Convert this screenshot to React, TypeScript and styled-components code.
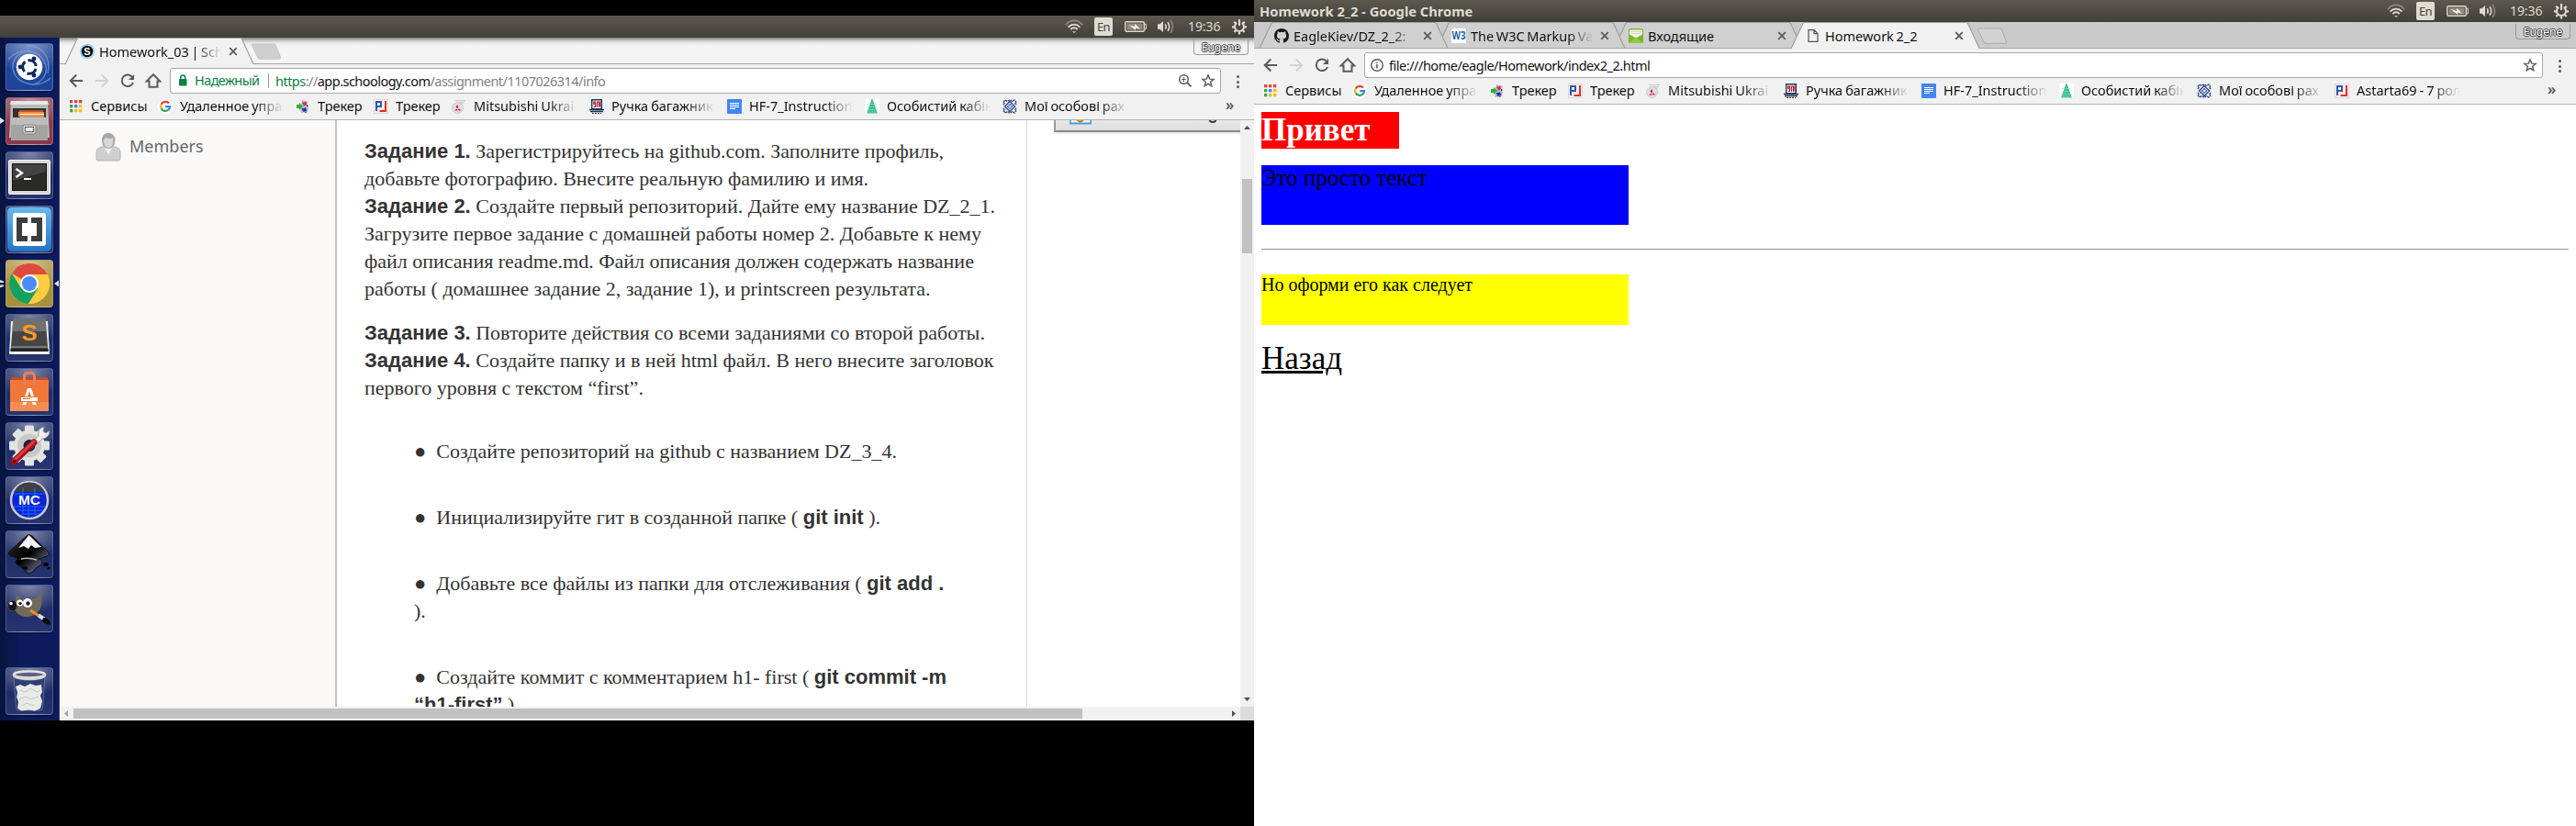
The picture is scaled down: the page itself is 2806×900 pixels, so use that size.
import React from 'react';
import styled, { createGlobalStyle, css } from 'styled-components';

const Global = createGlobalStyle`
  * { box-sizing: border-box; }
  body { margin: 0; background: #000; }
`;

const ui = css`font-family: 'Noto Sans', 'Open Sans', sans-serif;`;

const Desktop = styled.div`
  display: grid;
  grid-template-columns: 1366px 1440px;
  width: 2806px;
  height: 900px;
  overflow: hidden;
`;
const LeftScreen = styled.div`
  display: flex;
  flex-direction: column;
  padding-top: 17px;
  background: #000;
  min-width: 0;
`;
const RightScreen = styled.div`
  display: flex;
  flex-direction: column;
  background: #fff;
  min-width: 0;
`;
const PanelBar = styled.div`
  height: 24px;
  flex: none;
  display: flex;
  align-items: center;
  justify-content: space-between;
  padding: 0 8px 0 6px;
  background: linear-gradient(#5b584e, #403f3a);
  color: #dfdbd2;
  ${ui}
`;
const PanelTitle = styled.div`
  font-size: 14.7px;
  font-weight: 700;
  line-height: 24px;
  white-space: nowrap;
`;
const Tray = styled.div`
  display: flex;
  align-items: center;
  height: 24px;
`;
const Lang = styled.div`
  width: 20px;
  height: 20px;
  margin: 0 13px 0 12px;
  border-radius: 2px;
  background: #dfdbd2;
  color: #45433d;
  font-size: 13px;
  letter-spacing: -0.6px;
  line-height: 20px;
  text-align: center;
`;
const Clock = styled.div`
  width: 35px;
  margin: 0 13px 0 14px;
  font-size: 14px;
  letter-spacing: -0.1px;
  line-height: 24px;
  white-space: nowrap;
`;
const Workspace = styled.div`
  display: flex;
  height: 744px;
`;
const Launcher = styled.div`
  width: 65px;
  flex: none;
  display: flex;
  flex-direction: column;
  gap: 7px;
  padding: 6px 0 6px 0;
  background: linear-gradient(90deg, #071541, #0c1b5b 35%, #0d1b5e);
  border-right: 1px solid #3a3768;
`;
const Slot = styled.div<{ $last?: boolean }>`
  display: flex;
  align-items: center;
  margin-top: ${p => (p.$last ? 'auto' : '0')};
  height: 52px;
`;
const Mark = styled.div`
  width: 6px;
  height: 52px;
  flex: none;
`;
const Tile = styled.div<{ $bg: string }>`
  width: 52px;
  height: 52px;
  flex: none;
  border-radius: 4px;
  border: 1px solid rgba(190, 200, 240, 0.28);
  background: radial-gradient(ellipse 90% 60% at 50% 0, rgba(255,255,255,0.45), rgba(255,255,255,0) 100%), ${p => p.$bg};
  box-shadow: 0 1px 3px rgba(0, 0, 0, 0.5);
  svg { display: block; margin: -1px; }
`;
const Browser = styled.div`
  flex: 1;
  min-width: 0;
  display: flex;
  flex-direction: column;
  background: #fff;
`;
const TabStrip = styled.div<{ $focused?: boolean }>`
  position: relative;
  height: 29px;
  flex: none;
  display: flex;
  padding-left: 5px;
  border-bottom: 1px solid #a6a6a6;
  background: ${p => (p.$focused ? '#cacaca' : 'linear-gradient(#7d7c79 0, #c4c4c3 3px, #ebebeb 6px, #f4f4f4 10px)')};
`;
const TabBox = styled.div<{ $z: number }>`
  position: relative;
  z-index: ${p => p.$z};
  width: 207px;
  height: 29px;
  flex: none;
  margin-right: -14px;
`;
const TabShape = styled.svg`
  position: absolute;
  inset: 0;
`;
const TabInner = styled.div`
  position: relative;
  display: flex;
  align-items: center;
  height: 29px;
  padding-left: 17px;
`;
const TabLabel = styled.div<{ $fade?: boolean }>`
  width: 136px;
  margin-left: 5px;
  padding-right: 1px;
  font-size: 14.5px;
  word-spacing: -1.2px;
  line-height: 28px;
  color: #111;
  white-space: nowrap;
  overflow: hidden;
  ${ui}
  ${p => p.$fade && css`mask-image: linear-gradient(90deg, #000 78%, transparent 98%);`}
`;
const NewTab = styled.svg`
  display: block;
  margin-left: 8px;
`;
const Profile = styled.div`
  position: absolute;
  right: 6px;
  top: 2px;
  width: 60px;
  height: 17px;
  border: 1px solid #9b9b9b;
  border-top: 0;
  border-radius: 0 0 4px 4px;
  color: #fff;
  font-size: 12px;
  line-height: 17px;
  text-align: center;
  text-shadow: 1px 0 #444, -1px 0 #444, 0 1px #444, 0 -1px #444;
  ${ui}
`;
const Toolbar = styled.div`
  display: flex;
  height: 32px;
  flex: none;
  padding: 4px 0 0 4px;
  background: #f1f1f1;
`;
const ToolButton = styled.div`
  width: 28px;
  height: 28px;
  flex: none;
`;
const Address = styled.div`
  flex: 1;
  margin-left: 4px;
  display: flex;
  align-items: center;
  height: 28px;
  padding: 0 5px;
  border: 1px solid #a9a9a9;
  border-radius: 3px;
  background: #fff;
  svg { flex: none; }
`;
const UrlText = styled.div<{ $tight: number }>`
  flex: 1;
  font-size: 14.5px;
  letter-spacing: ${p => p.$tight}px;
  line-height: 26px;
  color: #111;
  white-space: nowrap;
  ${ui}
`;
const Secure = styled.div`
  width: 81px;
  height: 16px;
  margin: 0 7px 0 3px;
  border-right: 1px solid #999;
  color: #0b8043;
  font-size: 14.5px;
  letter-spacing: -0.6px;
  line-height: 14px;
  ${ui}
`;
const Green = styled.span`color: #0b8043;`;
const Grey = styled.span`color: #808080;`;
const MenuDots = styled.div`
  display: flex;
  flex-direction: column;
  align-items: center;
  gap: 2.6px;
  width: 36px;
  padding-top: 8px;
  i { width: 3px; height: 3px; border-radius: 2px; background: #5a5a5a; }
`;
const Bookmarks = styled.div`
  display: flex;
  align-items: center;
  height: 29px;
  flex: none;
  padding: 0 0 0 10px;
  background: #f1f1f1;
  border-bottom: 1px solid #b4b4b4;
`;
const Bookmark = styled.div<{ $w: number }>`
  display: flex;
  align-items: center;
  width: ${p => p.$w}px;
  flex: none;
  height: 28px;
  svg { flex: none; }
`;
const BookmarkLabel = styled.div<{ $fade: boolean }>`
  width: 113px;
  flex: 0 1 auto;
  margin: 0 0 2px 8px;
  overflow: hidden;
  font-size: 14.5px;
  word-spacing: -0.8px;
  line-height: 26px;
  color: #111;
  white-space: nowrap;
  ${ui}
  ${p => p.$fade && css`mask-image: linear-gradient(90deg, #000 72%, transparent 100%);`}
`;
const More = styled.div`
  margin-left: auto;
  width: 31px;
  padding-bottom: 4px;
  font-size: 16px;
  line-height: 22px;
  color: #555;
  font-weight: 600;
  ${ui}
`;

const Viewport = styled.div`
  display: grid;
  grid-template-columns: 1286px 15px;
  grid-template-rows: 639px 15px;
  height: 654px;
`;
const Page = styled.div`
  display: flex;
  overflow: hidden;
`;
const SideNav = styled.div`
  width: 302px;
  flex: none;
  display: flex;
  align-items: flex-start;
  padding: 13px 0 0 39px;
  background: #faf9f8;
  border-right: 2px solid #c4c4c4;
`;
const NavLabel = styled.div`
  margin-left: 9px;
  font-size: 18px;
  line-height: 31px;
  color: #666;
  ${ui}
`;
const Article = styled.div`
  width: 752px;
  flex: none;
  height: 639px;
  padding: 19px 0 0 30px;
  border-right: 1px solid #dadada;
  font: 22px/30px 'Liberation Serif', serif;
  color: #333;
  white-space: nowrap;
`;
const Paragraph = styled.div`margin-bottom: 18px;`;
const Tasks = styled.div`
  display: flex;
  flex-direction: column;
  gap: 42px;
  margin: 39px 0 0 54px;
`;
const Task = styled.div`white-space: pre;`;
const Strong = styled.strong`
  font-family: 'Liberation Sans', sans-serif;
  line-height: 0;
`;
const Aside = styled.div`
  flex: 1;
  padding-left: 29px;
`;
const CardEdge = styled.div`
  display: flex;
  justify-content: space-between;
  height: 13px;
  padding: 0 25px 0 15px;
  background: linear-gradient(#e8e8e8, #dedede);
  border-left: 2px solid #999;
  border-bottom: 2px solid #888;
  box-shadow: 0 2px 1px #eee;
`;
const VScroll = styled.div`
  display: flex;
  flex-direction: column;
  justify-content: space-between;
  align-items: center;
  background: #f1f1f1;
`;
const VThumb = styled.div`
  width: 11px;
  height: 81px;
  margin: 49px 0 auto;
  background: #c1c1c1;
`;
const HScroll = styled.div`
  display: flex;
  align-items: center;
  background: #f1f1f1;
`;
const HThumb = styled.div`
  width: 1099px;
  height: 11px;
  margin-right: auto;
  background: #c1c1c1;
`;
const Corner = styled.div`background: #dcdcdc;`;

const LocalPage = styled.div`
  padding: 8px;
  font-family: 'Liberation Serif', serif;
  color: #000;
`;
const Hello = styled.h1`
  width: 150px;
  height: 40px;
  margin: 0 0 18px;
  background: #f00;
  color: #fff;
  font-size: 35px;
  line-height: 40px;
`;
const Block = styled.p<{ $h: number; $bg: string; $size: number }>`
  width: 400px;
  height: ${p => p.$h}px;
  margin: 0;
  background: ${p => p.$bg};
  font-size: ${p => p.$size}px;
`;
const Rule = styled.hr`
  margin: 26px 0;
  border: 1px solid;
  border-color: #9a9a9a #eee #eee #9a9a9a;
  height: 2px;
`;
const Back = styled.a`
  display: block;
  margin-top: 17px;
  font-size: 35px;
  line-height: 40px;
  text-decoration: underline;
`;

/* ---------- panel ---------- */
const WifiIcon = () => (
  <svg width="20" height="16" viewBox="0 0 20 16" fill="none" strokeWidth="1.8">
    <path d="M.8 6.2C6-.2 14-.2 19.2 6.2" stroke="#8b887f" />
    <path d="M3.6 8.6c3.8-4 9-4 12.8 0" stroke="#dfdbd2" />
    <path d="M6.3 11c2.3-2.2 5.1-2.2 7.4 0" stroke="#dfdbd2" />
    <path d="M8 13.2h4L10 15z" fill="#dfdbd2" stroke="none" />
  </svg>
);
const BatteryIcon = () => (
  <svg width="24" height="14" viewBox="0 0 24 14">
    <rect x=".7" y="1.7" width="20.6" height="10.6" rx="1.5" fill="none" stroke="#dfdbd2" strokeWidth="1.4" />
    <rect x="2.5" y="3.5" width="17" height="7" fill="#8e8b82" />
    <path d="M22 4.2h1.4v5.6H22" fill="none" stroke="#dfdbd2" />
    <path d="M5 5.2 11 7V4l3 2.5 3 3.5-5-1.5V11z" fill="#f3efe6" />
  </svg>
);
const SoundIcon = () => (
  <svg width="20" height="18" viewBox="0 0 20 18" fill="none" stroke="#dfdbd2" strokeWidth="1.6">
    <path d="M1 6.2h2.4L7 3v12l-3.600-3.200H1z" fill="#dfdbd2" stroke="none" />
    <path d="M9.300 6.300c1 1.600 1 3.800 0 5.400M12 4.300c2 2.800 2 6.600 0 9.400" />
    <path d="M15 2c3.200 4 3.200 10 0 14" stroke="#8b887f" />
  </svg>
);
const GearIcon = () => (
  <svg width="16" height="18" viewBox="0 0 16 18" fill="none" stroke="#dfdbd2">
    <path d="M5.300 4.900a5 5 0 1 0 5.400 0" strokeWidth="2" />
    <path d="M8 1v7" strokeWidth="2" />
    <path d="M2.200 3.700l1.700 1.700M13.800 3.700l-1.700 1.700M0 9.300h2.400M16 9.300h-2.400M2.400 15l1.700-1.700M13.600 15l-1.700-1.700M8 17.500V15" strokeWidth="2.200" />
  </svg>
);
const SystemTray = () => (
  <Tray>
    <WifiIcon />
    <Lang>En</Lang>
    <BatteryIcon />
    <Spacer $w={11} />
    <SoundIcon />
    <Clock>19:36</Clock>
    <GearIcon />
  </Tray>
);
const Spacer = styled.span<{ $w: number }>`
  flex: none;
  width: ${p => p.$w}px;
`;

/* ---------- toolbar ---------- */
const tool = { width: 28, height: 28, viewBox: '0 0 28 28', fill: 'none', stroke: '#5a5a5a', strokeWidth: 2 } as const;
const BackIcon = () => <svg {...tool}><path d="M21 14H8M14.300 7.500 7.800 14l6.500 6.500" /></svg>;
const ForwardIcon = () => <svg {...tool} stroke="#d2d2d2"><path d="M7 14h13M13.700 7.500l6.500 6.500-6.500 6.500" /></svg>;
const ReloadIcon = () => (
  <svg {...tool}>
    <path d="M19.300 10.200A6.300 6.300 0 1 0 20 16" />
    <path d="M21 7v6h-6z" fill="#5a5a5a" stroke="none" />
  </svg>
);
const HomeIcon = () => <svg {...tool}><path d="M14 7.200 6.800 14.400h2.700v6.300h9v-6.300h2.700z" /></svg>;
const LockIcon = () => (
  <svg width="16" height="16" viewBox="0 0 16 16">
    <rect x="4" y="6" width="8.500" height="7.500" rx=".8" fill="#0b8043" />
    <path d="M5.800 6.500V4.500a2.450 2.450 0 0 1 4.900 0v2" fill="none" stroke="#0b8043" strokeWidth="1.500" />
  </svg>
);
const InfoIcon = () => (
  <svg width="16" height="16" viewBox="0 0 16 16">
    <circle cx="8" cy="8" r="6.300" fill="none" stroke="#5a5a5a" strokeWidth="1.400" />
    <path d="M8 7v4.400M8 4.400v1.600" stroke="#5a5a5a" strokeWidth="1.600" />
  </svg>
);
const ZoomIcon = () => (
  <svg width="16" height="16" viewBox="0 0 16 16" fill="none" stroke="#5a5a5a">
    <circle cx="6.500" cy="6.500" r="4.800" strokeWidth="1.500" />
    <path d="M10.200 10.200l4.200 4.200" strokeWidth="1.900" />
    <path d="M4.200 6.500h4.600M6.500 4.200v4.600" strokeWidth="1.100" />
  </svg>
);
const StarIcon = () => (
  <svg width="16" height="16" viewBox="0 0 16 16">
    <path d="M8 1.900l1.700 4.200 4.500.3-3.500 2.900 1.100 4.400L8 11.300l-3.800 2.400 1.100-4.400L1.800 6.400l4.500-.3z" fill="none" stroke="#5a5a5a" strokeWidth="1.400" />
  </svg>
);

/* ---------- favicons ---------- */
const fav = { width: 16, height: 16, viewBox: '0 0 16 16' } as const;
const AppsIcon = () => {
  const colors = ['#ea4335', '#ea4335', '#ea4335', '#34a853', '#4285f4', '#fbbc05', '#34a853', '#fbbc05', '#fbbc05'];
  return <svg {...fav}>{colors.map((c, i) => <rect key={i} x={1 + (i % 3) * 5} y={1 + Math.floor(i / 3) * 5} width="3.300" height="3.300" fill={c} />)}</svg>;
};
const GoogleIcon = () => (
  <svg {...fav} fill="none" strokeWidth="2.300">
    <circle cx="8" cy="8" r="8" fill="#fff" />
    <path d="M12 4.600A5 5 0 0 0 3.700 5.700" stroke="#ea4335" />
    <path d="M3.700 5.500a5 5 0 0 0 0 5" stroke="#fbbc05" />
    <path d="M3.700 10.400A5 5 0 0 0 11.500 11.500" stroke="#34a853" />
    <path d="M11.300 11.700A5 5 0 0 0 13 8.200H8" stroke="#4285f4" />
  </svg>
);
const TrackerIcon = () => (
  <svg {...fav}>
    <path d="M7 1l7 2-2 4 2 2-1 5-7 1-1-4z" fill="#b8b8c4" />
    <path d="M1 6h3V4l4 4-4 4v-2H1z" fill="#29b52b" />
    <path d="M7 3.500h3l1-1.500 1 4-3 1.500z" fill="#e2264d" />
    <path d="M7 10h3l1-1 1 4-4 .500z" fill="#2222cf" />
    <path d="M12 6l2 1-2 1.500zM9 13.500l3 .5-1 1z" fill="#222" />
  </svg>
);
const PjIcon = () => (
  <svg {...fav} fill="none" strokeWidth="2">
    <rect x=".5" y=".5" width="15" height="15" fill="#f3f3f6" stroke="#d9d9d9" strokeWidth="1" />
    <path d="M3 13V3h5v5H4" stroke="#3156b4" />
    <path d="M13 2v11H6.500" stroke="#f32a10" />
  </svg>
);
const MitsuIcon = () => (
  <svg {...fav}>
    <circle cx="6.500" cy="9.500" r="6" fill="#dedede" stroke="#bbb" strokeWidth=".6" />
    <path d="M3 1.500h12M5 3.500h9M9 5h4" stroke="#c8c8c8" />
    <path d="M6 6l1.300 2.600L6 10.500 4.700 8.600zM5.400 10.800 3 12.500h4zM6.800 10.800 8 12.500h2.200L8.500 10.500z" fill="#d8122d" />
  </svg>
);
const NineIcon = () => (
  <svg {...fav} fill="none">
    <path d="M2.700.7h10.600v10H2.700z" fill="#fff" stroke="#16385a" strokeWidth="1.400" />
    <path d="M6.500 5.200H4.700V3h1.800v5.500H4.500M8.500 8.700V3h2v5.700M12 2.500v6.200" stroke="#b5172f" strokeWidth="1.200" />
    <path d="M0 11.500h16M1 13.500h14" stroke="#16385a" strokeWidth="1.500" />
    <path d="M3 15.500h10" stroke="#16385a" strokeDasharray="2 1" />
  </svg>
);
const DocIcon = () => (
  <svg {...fav}>
    <rect width="16" height="16" rx="1" fill="#4285f4" />
    <path d="M3 4.500h10M3 6.500h10M3 8.500h10M3 10.500h6" stroke="#fff" />
  </svg>
);
const TreeIcon = () => (
  <svg {...fav}>
    <rect width="16" height="16" fill="#fff" />
    <path d="M7.500 0h1L13 13l1 2.500H2L3 13z" fill="#3fbf8b" />
    <path d="M3 5.500h10M3 8.500h10M2 11.500h12M2 14h12" stroke="#8fe0bf" strokeWidth=".7" strokeDasharray="1.500 .5" />
  </svg>
);
const RosetteIcon = () => (
  <svg {...fav} fill="none" stroke="#2c4a8c" strokeWidth="1.400">
    <path d="M8 2.500 13.500 8 8 13.500 2.500 8z" />
    <path d="M8 5l1 2 2 1-2 1-1 2-1-2-2-1 2-1z" strokeWidth=".9" />
    <path d="M1 3.500 3 1l2.500 1.500L8 .700l2.500 1.800L13 1l2 2.500M1 12.500 3 15l2.500-1.500L8 15.300l2.500-1.800L13 15l2-2.500M1 6l1.300-2M1 10l1.300 2M15 6l-1.300-2M15 10l-1.300 2" strokeDasharray="2.500 .8" />
  </svg>
);
const SchoologyIcon = () => (
  <svg {...fav}>
    <circle cx="8" cy="8" r="8" fill="#8fd3f5" />
    <circle cx="8" cy="8" r="6.200" fill="#0b0b0b" />
    <text x="8" y="12" textAnchor="middle" fontFamily="Liberation Sans" fontWeight="700" fontSize="11" fill="#fff">S</text>
  </svg>
);
const GithubIcon = () => (
  <svg {...fav}>
    <path fill="#191717" d="M8 0C3.580 0 0 3.580 0 8c0 3.540 2.290 6.530 5.470 7.590.4.070.55-.17.55-.38 0-.19-.01-.82-.01-1.490-2.010.37-2.530-.49-2.690-.94-.09-.23-.48-.94-.82-1.130-.28-.15-.68-.52-.01-.53.63-.01 1.080.58 1.230.82.72 1.210 1.870.87 2.330.66.07-.52.28-.87.51-1.070-1.780-.2-3.640-.89-3.640-3.950 0-.87.31-1.590.82-2.150-.08-.2-.36-1.020.08-2.120 0 0 .67-.21 2.200.82a7.600 7.600 0 0 1 4 0c1.530-1.040 2.200-.82 2.200-.82.44 1.100.16 1.920.08 2.120.51.56.82 1.270.82 2.150 0 3.070-1.870 3.750-3.650 3.950.29.25.54.73.54 1.480 0 1.070-.01 1.930-.01 2.200 0 .21.15.46.55.38A8.010 8.010 0 0 0 16 8c0-4.420-3.580-8-8-8z" />
  </svg>
);
const W3Icon = () => (
  <svg {...fav}>
    <rect width="16" height="16" rx="1" fill="#fff" />
    <text x="8" y="12" textAnchor="middle" textLength="15" lengthAdjust="spacingAndGlyphs" fontFamily="Open Sans" fontWeight="700" fontSize="11.500" fill="#1765a8">W3</text>
  </svg>
);
const MailIcon = () => (
  <svg {...fav}>
    <rect width="16" height="16" rx="1.500" fill="#79b530" />
    <path d="M1 1.500h14v5L8 10.500 1 6.500z" fill="#f6f6ee" />
    <path d="M3 3.500h10M3 5.500h10" stroke="#cfcfbf" strokeWidth=".8" />
    <path d="M0 16 8 9.500 16 16z" fill="#92ca42" />
  </svg>
);
const FileIcon = () => (
  <svg {...fav} fill="none" stroke="#555" strokeWidth="1.200">
    <path d="M3 1.600h6l4 4v8.800H3zM9 1.600v4h4" />
  </svg>
);

const CloseIcon = () => (
  <svg width="10" height="10" viewBox="0 0 10 10"><path d="M1.200 1.200l7.600 7.600M8.800 1.200 1.200 8.800" stroke="#5a5a5a" strokeWidth="1.800" /></svg>
);

type TabProps = { icon: React.ReactNode; label: string; fade?: boolean; active?: boolean; z: number };
const Tab = ({ icon, label, fade, active, z }: TabProps) => (
  <TabBox $z={z}>
    <TabShape width="207" height="29" viewBox="0 0 207 29">
      <path d={active ? 'M.5 29.500 1.500 28 14 .5h179L205.500 28l1 1.500z' : 'M1.500 28 14 .5h179L205.500 28z'} fill={active ? '#f1f1f1' : '#d0d0d0'} />
      <path d="M0 28.500h1.200L14 1.500q.5-1 1.500-1H192q1 0 1.500 1L206 28.500h1" fill="none" stroke="#a0a0a0" strokeWidth="1.200" />
      {!active && <path d="M0 28.500h207" stroke="#a6a6a6" />}
    </TabShape>
    <TabInner>{icon}<TabLabel $fade={fade}>{label}</TabLabel><Spacer $w={5} /><CloseIcon /></TabInner>
  </TabBox>
);
const NewTabButton = ({ focused }: { focused?: boolean }) => (
  <NewTab width="38" height="28" viewBox="0 0 38 28">
    <path d="M4.500 7h23q1.500 0 2 1.500l5 13q.5 1.700-1.500 1.700H12q-1.500 0-2-1.200L3.600 8.500Q3 7 4.500 7z" fill={focused ? '#d2d2d2' : '#cfcfcf'} stroke={focused ? '#aaa' : '#c4c4c4'} />
  </NewTab>
);

const bookmarks = [
  { icon: <AppsIcon />, label: 'Сервисы', w: 97, fade: false },
  { icon: <GoogleIcon />, label: 'Удаленное упра', w: 150, fade: true },
  { icon: <TrackerIcon />, label: 'Трекер', w: 85, fade: false },
  { icon: <PjIcon />, label: 'Трекер', w: 85, fade: false },
  { icon: <MitsuIcon />, label: 'Mitsubishi Ukrai', w: 150, fade: true },
  { icon: <NineIcon />, label: 'Ручка багажник', w: 150, fade: true },
  { icon: <DocIcon />, label: 'HF-7_Instruction', w: 150, fade: true },
  { icon: <TreeIcon />, label: 'Особистий кабін', w: 150, fade: true },
  { icon: <RosetteIcon />, label: 'Мої особові рах', w: 150, fade: true },
  { icon: <PjIcon />, label: 'Astarta69 - 7 рол', w: 150, fade: true },
];
const BookmarkBar = ({ count }: { count: number }) => (
  <Bookmarks>
    {bookmarks.slice(0, count).map((b, i) => (
      <Bookmark key={i} $w={b.w}>{b.icon}<BookmarkLabel $fade={b.fade}>{b.label}</BookmarkLabel></Bookmark>
    ))}
    <More>»</More>
  </Bookmarks>
);
const NavButtons = () => (
  <>
    <ToolButton><BackIcon /></ToolButton>
    <ToolButton><ForwardIcon /></ToolButton>
    <ToolButton><ReloadIcon /></ToolButton>
    <ToolButton><HomeIcon /></ToolButton>
  </>
);

/* ---------- launcher icons, drawn on 52×52 tiles ---------- */
const art = { width: 52, height: 52, viewBox: '0 0 52 52' } as const;
const DashArt = () => (
  <svg {...art} fill="none">
    <path d="M3 18C14 4 38 6 44 24c2 12-6 20-16 21M49 38C36 50 12 46 8 28c-1-12 8-19 18-20M24 3c16 0 26 12 22 30" stroke="#8fa6dd" strokeWidth="1.500" opacity=".6" />
    <circle cx="26" cy="26" r="14.200" fill="#fff" />
    <circle cx="26" cy="26" r="7.300" stroke="#10255e" strokeWidth="3" strokeDasharray="12 3.300" strokeDashoffset="-2" />
    <g fill="#10255e"><circle cx="16" cy="26" r="2.400" /><circle cx="31" cy="17" r="2.400" /><circle cx="31" cy="35" r="2.400" /></g>
  </svg>
);
const FilesArt = () => (
  <svg {...art}>
    <path d="M6 5h40l2 39H4z" fill="#b9b9b9" />
    <path d="M6 4h40l1 4H5z" fill="#e6e6e4" />
    <rect x="8" y="12" width="36" height="14" fill="#343029" />
    <path d="M15 14h26v3H15z" fill="#b8572a" /><path d="M14 16h28v5H14z" fill="#ef8f43" /><path d="M16 18.500h26" stroke="#fff3dd" />
    <path d="M6 22h9l1-1h26l1 1h3v25H6z" fill="#a3a3a1" />
    <path d="M6 22h40v8H6z" fill="#bdbdbb" />
    <rect x="25" y="31" width="14" height="10" rx="2" fill="#ccc" stroke="#8a8a8a" transform="translate(-6 -1)" />
    <rect x="21.500" y="32.500" width="9" height="5" fill="#eee" stroke="#666" />
  </svg>
);
const TerminalArt = () => (
  <svg {...art}>
    <rect x="3.500" y="9.500" width="45" height="37" rx="1" fill="#d8d8d6" stroke="#f5f5f5" />
    <rect x="7.500" y="13.500" width="37" height="29" fill="#2a2a29" stroke="#111" />
    <path d="M8 14h36v8L8 32z" fill="#555" opacity=".6" />
    <path d="M11.500 19l6.500 4.500-6.500 4.500" fill="none" stroke="#fff" strokeWidth="2.200" />
    <path d="M20 30h8" stroke="#fff" strokeWidth="2" />
  </svg>
);
const BracketsArt = () => (
  <svg {...art}>
    <defs><linearGradient id="br" x2="0" y2="1"><stop stopColor="#69b7ec" /><stop offset="1" stopColor="#2473c4" /></linearGradient></defs>
    <rect x="2" y="2" width="48" height="48" rx="5" fill="url(#br)" />
    <rect x="8" y="8" width="36" height="36" rx="3" fill="#fff" />
    <path d="M12 13h12v6h-6v14h6v6H12zM40 13H28v6h6v14h-6v6h12z" fill="#3b3c3d" />
  </svg>
);
const ChromeArt = () => (
  <svg {...art}>
    <circle cx="26" cy="26" r="22" fill="#ffcd41" />
    <path d="M26 26 6.950 15A22 22 0 0 1 45.500 16z" fill="#df4a3e" />
    <path d="M7 15a22 22 0 0 0 18 33L36 31l-19 0z" fill="#17a05f" />
    <path d="M26 16h19.600A22 22 0 0 1 25 48l10.500-17z" fill="#ffcd41" />
    <circle cx="26" cy="26" r="10" fill="#fff" /><circle cx="26" cy="26" r="8" fill="#4a8cf6" />
  </svg>
);
const SublimeArt = () => (
  <svg {...art}>
    <path d="M6 8h40l2 35q0 1-1 1H5q-1 0-1-1z" fill="#eee" />
    <path d="M8.500 5h35l3 36h-41z" fill="#454545" />
    <path d="M8.500 5h35l1.500 14H7z" fill="#8d8d8d" opacity=".6" />
    <path d="M5.500 36h41" stroke="#aaa" /><path d="M5.500 38h41v3h-41z" fill="#222" />
    <text x="26" y="29" textAnchor="middle" textLength="17" lengthAdjust="spacingAndGlyphs" fontFamily="Liberation Sans" fontWeight="700" fontSize="23" fill="#ff9a25">S</text>
  </svg>
);
const SoftwareArt = () => (
  <svg {...art}>
    <path d="M6 10h40l1 5H5z" fill="#c44b28" />
    <path d="M5 13h42v34H5z" fill="#f0763a" /><path d="M5 37h42v10H5z" fill="#f58d52" />
    <path d="M20.500 18V9q0-3.500 4-3.500h3q4 0 4 3.500v9" fill="none" stroke="#e8805c" strokeWidth="3" />
    <path d="M24 22h4l3 9h-3l-2-6-2 6h-3z" fill="#fff" /><path d="M17 32h18v4H17z" fill="#fff" /><path d="M19 33.500h8" stroke="#e8692a" />
    <path d="M19.500 37h4L22 40h-4zM28.500 37h4L34 40h-4z" fill="#fff" />
  </svg>
);
const SettingsArt = () => (
  <svg {...art}>
    <g fill="#e3e3e1">
      {[0, 45, 90, 135].map(a => <rect key={a} x="21" y="3.500" width="10" height="44" rx="1.500" transform={`rotate(${a} 26 25.500)`} />)}
      <circle cx="26" cy="25.500" r="17" />
    </g>
    <circle cx="26" cy="25.500" r="13" fill="#c9c9c7" /><circle cx="26" cy="25.500" r="6.500" fill="#132055" />
    <path d="M30 20l6-5c-1-5 1-9 6-10l-1 5 3 2 4-3c0 6-4 9-8 9l-6 6z" fill="#efefef" stroke="#888" strokeWidth=".8" />
    <path d="M9 43 31 22" stroke="#a5121d" strokeWidth="7" strokeLinecap="round" /><path d="M9 42 31 21" stroke="#e23a40" strokeWidth="3" strokeLinecap="round" />
    <circle cx="9.500" cy="42.500" r="1.800" fill="#500" />
  </svg>
);
const McArt = () => (
  <svg {...art}>
    <circle cx="26" cy="26" r="20" fill="#0a22d8" stroke="#c9c9cf" strokeWidth="2.500" />
    <path d="M9 17a19 19 0 0 1 34 0z" fill="#3c3f46" />
    <path d="M10 19h32M9 33h34M13 37h28M17 41h20M19 12v28M32 12v28M25 34v10" stroke="#1e86ff" opacity=".8" />
    <text x="26" y="31" textAnchor="middle" textLength="24" lengthAdjust="spacingAndGlyphs" fontFamily="Liberation Sans" fontWeight="700" fontSize="14" fill="#f4f4f4">MC</text>
  </svg>
);
const InkscapeArt = () => (
  <svg {...art}>
    <defs><linearGradient id="ink" x2="1" y2="1"><stop stopColor="#333" /><stop offset=".5" stopColor="#000" /><stop offset="1" stopColor="#9aa3c8" /></linearGradient></defs>
    <path d="M23 6q3-3 6 0l18 18q2 3-2 4l-9 3q6 2 3 6l-6 4q-3 5-7 6-4 0-5-5l-7-4q-5-3-2-6l2-1-9-4q-3-2-1-4z" fill="url(#ink)" stroke="#111" />
    <path d="M25.500 5 39 18l-7 1-4-3-3 4-5-3-6 2z" fill="#f4f4f6" />
    <path d="M17 31q8-2 17 1" stroke="#bbb" strokeWidth="1.500" fill="none" />
    <g fill="#050505"><ellipse cx="21" cy="41" rx="3" ry="1.800" /><ellipse cx="44" cy="37" rx="3" ry="2" /><circle cx="47" cy="41" r="1.500" /></g>
  </svg>
);
const GimpArt = () => (
  <svg {...art}>
    <path d="M12 10l5 6h12q7-1 10-9 2 15-2 21-6 8-16 7-9-1-11-9z" fill="#71695a" />
    <ellipse cx="7.500" cy="23" rx="5" ry="6" fill="#15171c" stroke="#555" /><circle cx="6" cy="20.500" r="1.800" fill="#fff" />
    <circle cx="15.500" cy="20" r="3.500" fill="#fff" /><circle cx="16" cy="20.500" r="1.700" fill="#222" />
    <circle cx="24" cy="20" r="5" fill="#fff" /><circle cx="24.500" cy="20.500" r="2.300" fill="#222" />
    <path d="M27 28 38 35" stroke="#e8912b" strokeWidth="3" /><path d="M36 33.500l6 4" stroke="#ddd" strokeWidth="4" />
    <path d="M41 36q7 0 8 8-8-1-9-5z" fill="#0a0a0a" />
  </svg>
);
const TrashArt = () => (
  <svg {...art}>
    <path d="M9 10h34l-2.500 34q0 3-3 3h-23q-3 0-3-3z" fill="#26366f" opacity=".7" stroke="#7984ab" />
    <path d="M11 21l5-2 5 2 6-3 6 2 6-1 1 8-2 4 2 6-2 8-6 2.500-7-1-8 1-4-3 1-7-2-5 1-5z" fill="#e9e9e7" />
    <path d="M16 25l6 2 5-4 7 4 4-2M15 35l7-3 6 3 8-3M18 42l5-3 8 3" fill="none" stroke="#c2c2c0" strokeWidth=".9" />
    <ellipse cx="26" cy="8" rx="17" ry="3.500" fill="#5c6385" stroke="#e4e4e0" strokeWidth="2.500" />
    <path d="M9 8q0 5 17 5t17-5" fill="none" stroke="#d4d4d0" strokeWidth="2.500" />
  </svg>
);

const deep = 'linear-gradient(#16255f, #26346f)';
const launcherItems = [
  { art: <DashArt />, bg: '#1d449a' },
  { art: <FilesArt />, bg: '#8a3a4a', left: 'one' },
  { art: <TerminalArt />, bg: deep },
  { art: <BracketsArt />, bg: deep },
  { art: <ChromeArt />, bg: '#a8913c', left: 'two', right: true },
  { art: <SublimeArt />, bg: deep },
  { art: <SoftwareArt />, bg: deep },
  { art: <SettingsArt />, bg: deep },
  { art: <McArt />, bg: deep },
  { art: <InkscapeArt />, bg: deep },
  { art: <GimpArt />, bg: deep },
  { art: <TrashArt />, bg: deep },
];

const UnityLauncher = () => (
  <Launcher>
    {launcherItems.map((item, i) => (
      <Slot key={i} $last={i === launcherItems.length - 1}>
        <Mark>
          {item.left && (
            <svg width="6" height="52" viewBox="0 0 6 52">
              {item.left === 'one' ? <path d="M0 22l5 3.500L0 29z" fill="#dfe2ea" /> : <path d="M0 22l4 1.500v1.500H0zM0 27.500h4V29l-4 1.500z" fill="#dfe2ea" />}
            </svg>
          )}
        </Mark>
        <Tile $bg={item.bg}>{item.art}</Tile>
        <Mark>{item.right && <svg width="6" height="52" viewBox="0 0 6 52"><path d="M6 22.500v7l-5-3.500z" fill="#dfe2ea" /></svg>}</Mark>
      </Slot>
    ))}
  </Launcher>
);

const MembersIcon = () => (
  <svg width="28" height="32" viewBox="0 0 28 32">
    <path d="M1 29V22q0-5 6-6l4-1h6l4 1q6 1 6 6v7q0 2-2 2H3q-2 0-2-2z" fill="#d0d0d0" stroke="#b5b5b5" />
    <path d="M9 16l5 8 5-8z" fill="#f2f2f2" />
    <path d="M7 9q0-8 7-8t7.500 8q-1 9-7.500 9T7 9z" fill="#a8a8a8" />
    <path d="M9 11q0-4 2-5 5 2 8 0v5q-1 6-5 6t-5-6z" fill="#d8d8d8" />
  </svg>
);
const Arrow = ({ d, color = '#505050' }: { d: string; color?: string }) => (
  <svg width="15" height="15" viewBox="0 0 15 15"><path d={d} fill={color} /></svg>
);

export default function App() {
  return (
    <>
      <Global />
      <Desktop>
        <LeftScreen>
          <PanelBar><span /><SystemTray /></PanelBar>
          <Workspace>
            <UnityLauncher />
            <Browser>
              <TabStrip>
                <Tab z={2} active fade icon={<SchoologyIcon />} label="Homework_03 | Sch" />
                <NewTabButton />
                <Profile>Eugene</Profile>
              </TabStrip>
              <Toolbar>
                <NavButtons />
                <Address>
                  <LockIcon />
                  <Spacer $w={2} />
                  <Secure>Надежный</Secure>
                  <UrlText $tight={-0.53}><Green>https</Green><Grey>://</Grey>app.schoology.com<Grey>/assignment/1107026314/info</Grey></UrlText>
                  <ZoomIcon />
                  <Spacer $w={9} />
                  <StarIcon />
                </Address>
                <MenuDots><i /><i /><i /></MenuDots>
              </Toolbar>
              <BookmarkBar count={9} />
              <Viewport>
                <Page>
                  <SideNav><MembersIcon /><NavLabel>Members</NavLabel></SideNav>
                  <Article>
                    <Paragraph>
                      <Strong>Задание 1.</Strong> Зарегистрируйтесь на github.com. Заполните профиль,<br />
                      добавьте фотографию. Внесите реальную фамилию и имя.<br />
                      <Strong>Задание 2.</Strong> Создайте первый репозиторий. Дайте ему название DZ_2_1.<br />
                      Загрузите первое задание с домашней работы номер 2. Добавьте к нему<br />
                      файл описания readme.md. Файл описания должен содержать название<br />
                      работы ( домашнее задание 2, задание 1), и printscreen результата.
                    </Paragraph>
                    <Paragraph>
                      <Strong>Задание 3.</Strong> Повторите действия со всеми заданиями со второй работы.<br />
                      <Strong>Задание 4.</Strong> Создайте папку и в ней html файл. В него внесите заголовок<br />
                      первого уровня с текстом “first”.
                    </Paragraph>
                    <Tasks>
                      <Task>{'●  Создайте репозиторий на github с названием DZ_3_4.'}</Task>
                      <Task>{'●  Инициализируйте гит в созданной папке ( '}<Strong>git init</Strong>{' ).'}</Task>
                      <Task>{'●  Добавьте все файлы из папки для отслеживания ( '}<Strong>git add .</Strong>{'\n).'}</Task>
                      <Task>{'●  Создайте коммит с комментарием h1- first ( '}<Strong>git commit -m{'\n'}“h1-first”</Strong>{' ).'}</Task>
                    </Tasks>
                  </Article>
                  <Aside>
                    <CardEdge>
                      <svg width="24" height="5" viewBox="0 0 24 5"><path d="M.7 0v3.500h22.600V0" fill="#e9f2fa" stroke="#4d9fd6" strokeWidth="1.800" /><path d="M7 0l5 3 4-3z" fill="#c98a2c" /></svg>
                      <svg width="10" height="5" viewBox="0 0 10 5"><path d="M1.500 0q1 2 3.500 2t3.500-2" fill="none" stroke="#333" strokeWidth="2" /></svg>
                    </CardEdge>
                  </Aside>
                </Page>
                <VScroll>
                  <Arrow d="M4 10h7L7.500 6z" />
                  <VThumb />
                  <Arrow d="M4 5h7L7.500 9z" />
                </VScroll>
                <HScroll>
                  <Arrow d="M9 4v7L5 7.500z" color="#a3a3a3" />
                  <HThumb />
                  <Arrow d="M6 4v7l4-3.500z" />
                </HScroll>
                <Corner />
              </Viewport>
            </Browser>
          </Workspace>
        </LeftScreen>

        <RightScreen>
          <PanelBar><PanelTitle>Homework 2_2 - Google Chrome</PanelTitle><SystemTray /></PanelBar>
          <TabStrip $focused>
            <Tab z={4} fade icon={<GithubIcon />} label="EagleKiev/DZ_2_2:" />
            <Tab z={3} fade icon={<W3Icon />} label="The W3C Markup Va" />
            <Tab z={2} icon={<MailIcon />} label="Входящие" />
            <Tab z={5} active icon={<FileIcon />} label="Homework 2_2" />
            <NewTabButton focused />
            <Profile>Eugene</Profile>
          </TabStrip>
          <Toolbar>
            <NavButtons />
            <Address>
              <InfoIcon />
              <Spacer $w={5} />
              <UrlText $tight={-0.48}>file:///home/eagle/Homework/index2_2.html</UrlText>
              <StarIcon />
            </Address>
            <MenuDots><i /><i /><i /></MenuDots>
          </Toolbar>
          <BookmarkBar count={10} />
          <LocalPage>
            <Hello>Привет</Hello>
            <Block $h={65} $bg="#00f" $size={25}>Это просто текст</Block>
            <Rule />
            <Block $h={55} $bg="#ff0" $size={20}>Но оформи его как следует</Block>
            <Back>Назад</Back>
          </LocalPage>
        </RightScreen>
      </Desktop>
    </>
  );
}
